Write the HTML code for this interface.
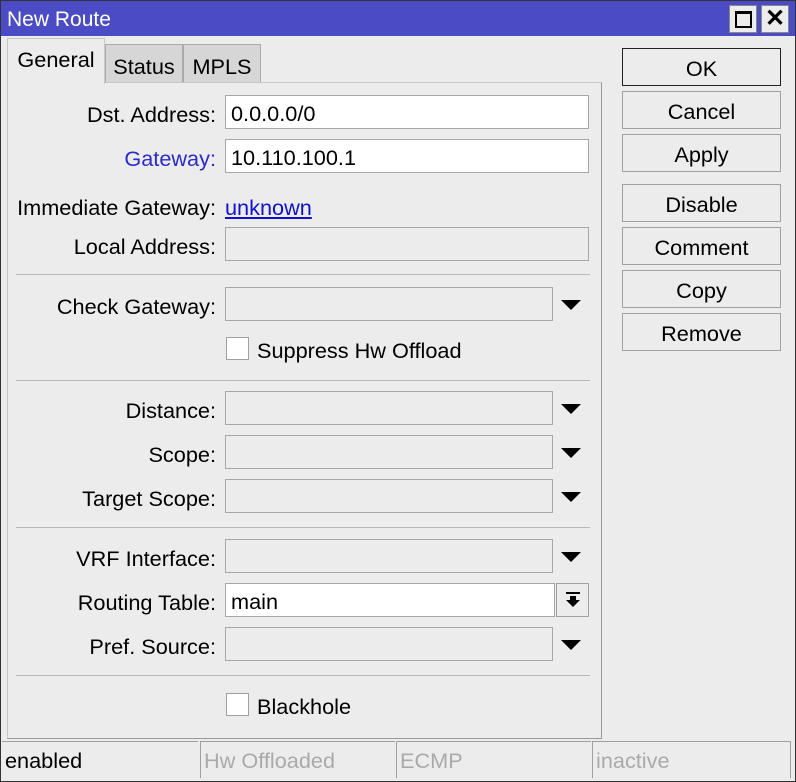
<!DOCTYPE html>
<html><head><style>
*{box-sizing:border-box;margin:0;padding:0}
body{width:796px;height:782px;background:#333;font-family:"Liberation Sans",sans-serif;font-size:21.7px;color:#000;position:relative;overflow:hidden}
#win{position:absolute;left:1px;top:1px;width:794px;height:780px;background:#ececec}
.a{position:absolute}
.title{left:0;top:0;width:794px;height:35px;background:#4b4bc6;color:#fff;font-size:21px;padding:7px 0 0 6px}
.tb{top:4px;width:28px;height:28px;background:#ececec;border:1px solid #888}
.tab{height:38px;text-align:center;padding-top:8px;border:1px solid #aaa;border-bottom:none}
.lbl{width:215px;text-align:right;white-space:nowrap;margin-top:1px}
.in{height:34px;border:1px solid #a8a8a8;background:#ececec;padding:5px 0 0 5px}
.w{background:#fff}
.sep{left:15px;width:574px;height:2px;border-top:1px solid #b8b8b8}
.arr{width:0;height:0;border-left:10px solid transparent;border-right:10px solid transparent;border-top:10px solid #000}
.btn{left:621px;width:159px;height:38px;border:1px solid #a0a0a0;text-align:center;padding-top:7px;background:#ececec}
.cb{width:23px;height:23px;background:#fff;border:1px solid #a0a0a0}
.st{top:740px;height:37px;border-left:1px solid #a0a0a0;border-top:1px solid #a0a0a0;padding:6px 0 0 3px;color:#aaa}
</style></head><body><div id="win">
<div class="a title">New Route</div>
<div class="a tb" style="left:728px"><div class="a" style="left:5px;top:5px;width:17px;height:17px;border:2px solid #000;border-top-width:3px"></div></div>
<div class="a tb" style="left:760px;font-weight:bold;font-size:24px;text-align:center;line-height:25px">✕</div>

<div class="a" style="left:6px;top:81px;width:595px;height:657px;border:1px solid #c8c8c8;border-right:1px solid #999;border-bottom:1px solid #999;background:#ececec"></div>
<div class="a tab" style="left:6px;top:37px;width:98px;height:46px;background:#ececec;border-color:#c8c8c8">General</div>
<div class="a tab" style="left:104px;top:43px;width:78px;background:#d6d6d6;padding-top:9px">Status</div>
<div class="a tab" style="left:182px;top:43px;width:78px;background:#d6d6d6;padding-top:9px">MPLS</div>

<div class="a lbl" style="top:100px">Dst. Address:</div>
<div class="a in w" style="left:224px;top:94px;width:364px">0.0.0.0/0</div>
<div class="a lbl" style="top:144px;color:#2a2acc">Gateway:</div>
<div class="a in w" style="left:224px;top:138px;width:364px">10.110.100.1</div>
<div class="a lbl" style="top:193px">Immediate Gateway:</div>
<div class="a" style="left:224px;top:194px;color:#1010d0;text-decoration:underline">unknown</div>
<div class="a lbl" style="top:232px">Local Address:</div>
<div class="a in" style="left:224px;top:226px;width:364px"></div>
<div class="a sep" style="top:273px"></div>

<div class="a lbl" style="top:292px">Check Gateway:</div>
<div class="a in" style="left:224px;top:286px;width:328px"></div>
<div class="a arr" style="left:560px;top:299px"></div>
<div class="a cb" style="left:225px;top:336px"></div>
<div class="a" style="left:256px;top:337px">Suppress Hw Offload</div>
<div class="a sep" style="top:379px"></div>

<div class="a lbl" style="top:396px">Distance:</div>
<div class="a in" style="left:224px;top:390px;width:328px"></div>
<div class="a arr" style="left:560px;top:403px"></div>
<div class="a lbl" style="top:440px">Scope:</div>
<div class="a in" style="left:224px;top:434px;width:328px"></div>
<div class="a arr" style="left:560px;top:447px"></div>
<div class="a lbl" style="top:484px">Target Scope:</div>
<div class="a in" style="left:224px;top:478px;width:328px"></div>
<div class="a arr" style="left:560px;top:491px"></div>
<div class="a sep" style="top:526px"></div>

<div class="a lbl" style="top:544px">VRF Interface:</div>
<div class="a in" style="left:224px;top:538px;width:328px"></div>
<div class="a arr" style="left:560px;top:551px"></div>
<div class="a lbl" style="top:588px">Routing Table:</div>
<div class="a in w" style="left:224px;top:582px;width:330px">main</div>
<div class="a" style="left:555px;top:582px;width:33px;height:34px;border:1px solid #a0a0a0"><div class="a" style="left:9px;top:8px;width:14px;height:2px;background:#000"></div><div class="a" style="left:13px;top:12px;width:6px;height:4px;background:#000"></div><div class="a" style="left:9px;top:16px;width:0;height:0;border-left:7px solid transparent;border-right:7px solid transparent;border-top:7px solid #000"></div></div>
<div class="a lbl" style="top:632px">Pref. Source:</div>
<div class="a in" style="left:224px;top:626px;width:328px"></div>
<div class="a arr" style="left:560px;top:639px"></div>
<div class="a sep" style="top:674px"></div>
<div class="a cb" style="left:225px;top:692px"></div>
<div class="a" style="left:256px;top:693px">Blackhole</div>

<div class="a btn" style="top:47px;border-color:#222">OK</div>
<div class="a btn" style="top:90px">Cancel</div>
<div class="a btn" style="top:133px">Apply</div>
<div class="a btn" style="top:183px">Disable</div>
<div class="a btn" style="top:226px">Comment</div>
<div class="a btn" style="top:269px">Copy</div>
<div class="a btn" style="top:312px">Remove</div>

<div class="a st" style="left:1px;width:196px;color:#000;border-left:none">enabled</div>
<div class="a st" style="left:199px;width:195px">Hw Offloaded</div>
<div class="a st" style="left:395px;width:195px">ECMP</div>
<div class="a st" style="left:591px;width:199px;border-right:1px solid #a0a0a0">inactive</div>
</div></body></html>
